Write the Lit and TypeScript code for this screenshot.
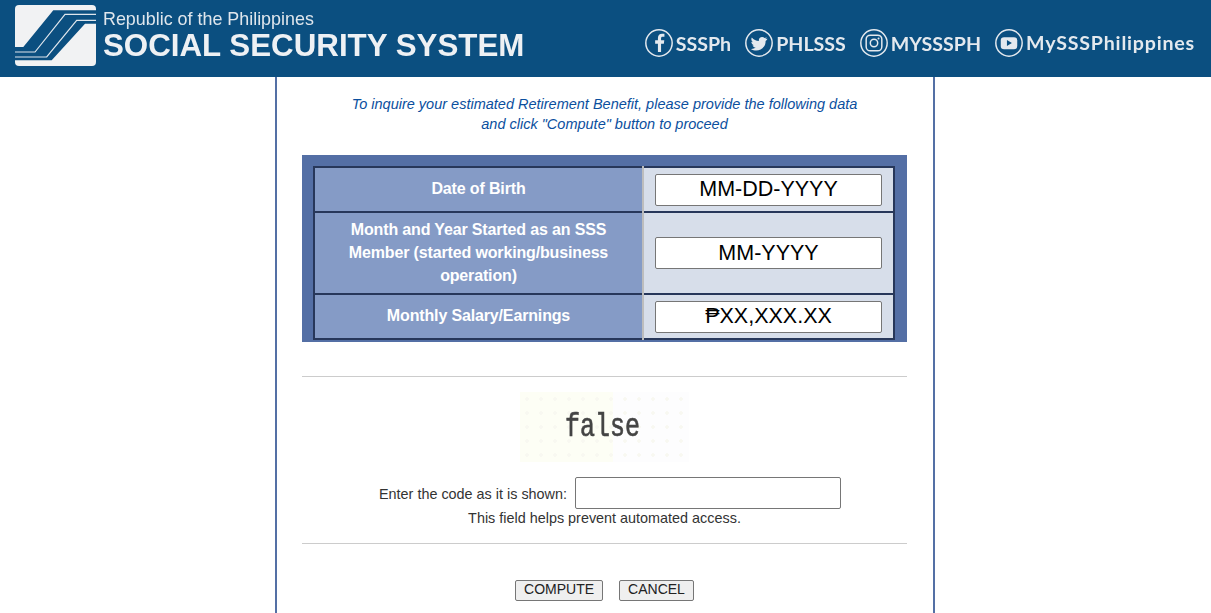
import { LitElement, html, css, svg } from "lit";
import { customElement } from "lit/decorators.js";

const logo = html`<svg class="logo" viewBox="0 0 81 61" width="81" height="61">
  <rect x="0" y="0" width="81" height="61" rx="4" fill="#f1f2f3"></rect>
  <path d="M38.300 5.300 L81 5.300 L81 18.700 L70 18.700 L36.700 55.300 L0 55.300 L0 42 L8.300 42 Z" fill="#0b4f80"></path>
  <path d="M0 47 L20 47 L50 9.300 L81 9.300" fill="none" stroke="#dfe6ec" stroke-width="1.200"></path>
  <path d="M0 52 L31.700 52 L61.700 15.300 L81 15.300" fill="none" stroke="#dfe6ec" stroke-width="1.200"></path>
</svg>`;

const icons = {
  f: svg`<path d="M19.500 28V17.800h3.400l.5-4h-3.900v-2.500c0-1.200.4-1.900 2-1.900h2.100V5.900c-.5-.1-1.600-.2-2.900-.2-3 0-5 1.800-5 5.100v3h-3.400v4h3.400V28z" fill="#e4e9ee"></path>`,
  t: svg`<path d="M27 11.500c-.8.400-1.600.6-2.400.7.900-.5 1.500-1.300 1.800-2.300-.8.500-1.700.8-2.600 1-1.700-1.800-4.500-1.700-6 .1-.9 1.100-1.200 2.400-.9 3.700-3.400-.2-6.500-1.800-8.600-4.400-1.100 1.900-.6 4.400 1.300 5.700-.7 0-1.300-.2-1.900-.5 0 2 1.400 3.700 3.400 4.100-.6.200-1.300.2-1.900.1.600 1.700 2.100 2.800 3.900 2.900-1.700 1.300-3.900 2-6 1.700 5.500 3.300 12.500 2.100 16-3 1.300-2 2-4.300 1.900-6.600.8-.6 1.500-1.300 2-2.200z" fill="#e4e9ee"></path>`,
  i: svg`<rect x="7.500" y="7.500" width="19" height="19" rx="5" fill="none" stroke="#e4e9ee" stroke-width="1.800"></rect><circle cx="17" cy="17" r="4.500" fill="none" stroke="#e4e9ee" stroke-width="1.800"></circle><circle cx="22.500" cy="11.500" r="1.200" fill="#e4e9ee"></circle>`,
  y: svg`<rect x="7" y="10" width="20" height="14.500" rx="4" fill="#e4e9ee"></rect><path d="M14.500 13.500v7l6-3.500z" fill="#0b4f80"></path>`,
};

const socials = [
  { icon: icons.f, label: "SSSPh", wide: false },
  { icon: icons.t, label: "PHLSSS", wide: false },
  { icon: icons.i, label: "MYSSSPH", wide: false },
  { icon: icons.y, label: "MySSSPhilippines", wide: true },
];

@customElement("app-root")
export class AppRoot extends LitElement {
  static styles = css`
    :host {
      display: block;
      height: 613px;
      overflow: hidden;
      font-family: "Liberation Sans", Arial, sans-serif;
      background: #fff;
    }
    .top {
      height: 77px;
      background: #0b4f80;
      display: flex;
      justify-content: space-between;
      padding: 5px 16px 0 15px;
      box-sizing: border-box;
    }
    .brand {
      display: flex;
      gap: 7px;
      height: 61px;
      color: #eef1f4;
    }
    .logo {
      flex: none;
    }
    .brand-text {
      padding-top: 4px;
      filter: blur(0.3px);
    }
    .republic {
      font-size: 17.900px;
      line-height: 20px;
      color: #dfe6ec;
    }
    .sss {
      font-size: 31.300px;
      line-height: 33px;
      font-weight: 700;
      white-space: nowrap;
    }
    .social {
      display: flex;
      align-items: center;
      gap: 14px;
      height: 76px;
      margin-top: -5px;
      padding-top: 10px;
      box-sizing: border-box;
      color: #e4e9ee;
      font-family: Lato, sans-serif;
      font-weight: 700;
      font-size: 19.600px;
      filter: blur(0.3px);
    }
    .soc {
      display: flex;
      align-items: center;
      gap: 3px;
    }
    .soc svg {
      flex: none;
    }
    .soc .wide {
      letter-spacing: 0.800px;
      margin-top: -2px;
    }
    .page {
      width: 660px;
      margin-left: 275px;
      box-sizing: border-box;
      border-left: 2px solid #5470a5;
      border-right: 2px solid #5470a5;
      height: 536px;
      padding: 17px 26px 0 25px;
    }
    .intro {
      margin: 0 0 21px;
      text-align: center;
      color: #0b4f9e;
      font-size: 14.500px;
      font-style: italic;
      line-height: 20px;
    }
    .frame {
      background: #546fa5;
      padding: 11px 12px 2px 11px;
    }
    .grid {
      position: relative;
      display: grid;
      grid-template-columns: 329px 249px;
      grid-template-rows: 45px 82px 45px;
      border-top: 2px solid #27375a;
      border-left: 2px solid #27375a;
      border-right: 2px solid #27375a;
    }
    .sep {
      position: absolute;
      left: 327px;
      top: -2px;
      bottom: 0;
      width: 2px;
      background: #bdbdbd;
    }
    .lbl {
      background: #859bc6;
      color: #fff;
      font-weight: 700;
      font-size: 16px;
      line-height: 23px;
      text-align: center;
      display: flex;
      align-items: center;
      justify-content: center;
      padding: 0 30px 2px 28px;
      box-sizing: border-box;
      border-bottom: 2px solid #27375a;
      letter-spacing: -0.150px;
    }
    .val {
      background: #d7deea;
      display: flex;
      align-items: center;
      justify-content: center;
      border-bottom: 2px solid #27375a;
    }
    input {
      box-sizing: border-box;
      font-family: inherit;
      background: #fff;
      border: 1px solid #767676;
      border-radius: 2px;
      padding: 0;
      outline: none;
    }
    .val input {
      width: 227px;
      height: 32px;
      font-size: 21.500px;
      text-align: center;
    }
    .val input::placeholder {
      color: #000;
      opacity: 1;
    }
    hr {
      border: 0;
      border-top: 1px solid #ccc;
      margin: 0;
    }
    .rule-a {
      margin-top: 34px;
    }
    .captcha {
      width: 169px;
      height: 70px;
      margin: 15px auto;
      padding-right: 4px;
      box-sizing: border-box;
      background-color: #fdfdfe;
      background-image:
        radial-gradient(circle, #f8f8f1 1.500px, transparent 2px),
        linear-gradient(90deg, #fdfef5 55%, #fdfdfe 55%);
      background-size: 14px 14px, 100% 100%;
      display: flex;
      align-items: center;
      justify-content: center;
      color: #444;
      font-family: "Liberation Mono", monospace;
      font-size: 25px;
    }
    .captcha span {
      display: block;
      transform: scaleY(1.300);
      -webkit-text-stroke: 0.500px #444;
      filter: blur(0.500px);
    }
    .code {
      display: flex;
      justify-content: center;
      align-items: center;
      gap: 8px;
      padding-left: 11px;
      color: #333;
      font-size: 14.400px;
      height: 32px;
    }
    .code label {
      margin-top: 2px;
    }
    .code input {
      width: 266px;
      height: 32px;
    }
    .help {
      text-align: center;
      color: #333;
      font-size: 14.400px;
      line-height: 15px;
      margin: 2px 0 17px;
    }
    .actions {
      display: flex;
      justify-content: center;
      gap: 16px;
      margin-top: 36px;
    }
    button {
      font-family: inherit;
      font-size: 14px;
      color: #222;
      background: #efefef;
      border: 1px solid #767676;
      border-radius: 2px;
      height: 21px;
      padding: 0 8px 2px;
      line-height: 17px;
    }
  `;

  render() {
    return html`
      <div class="top">
        <div class="brand">
          ${logo}
          <div class="brand-text">
            <div class="republic">Republic of the Philippines</div>
            <div class="sss">SOCIAL SECURITY SYSTEM</div>
          </div>
        </div>
        <div class="social">
          ${socials.map(
            (s) => html`<div class="soc">
              <svg viewBox="0 0 34 34" width="28" height="28">
                <circle cx="17" cy="17" r="16" fill="none" stroke="#e4e9ee" stroke-width="1.800"></circle>
                ${s.icon}
              </svg>
              <span class=${s.wide ? "wide" : ""}>${s.label}</span>
            </div>`
          )}
        </div>
      </div>
      <div class="page">
        <p class="intro">
          To inquire your estimated Retirement Benefit, please provide the following data<br />
          and click "Compute" button to proceed
        </p>
        <div class="frame">
          <div class="grid">
            <div class="lbl">Date of Birth</div>
            <div class="val"><input placeholder="MM-DD-YYYY" /></div>
            <div class="lbl">Month and Year Started as an SSS Member (started working/business operation)</div>
            <div class="val"><input placeholder="MM-YYYY" /></div>
            <div class="lbl">Monthly Salary/Earnings</div>
            <div class="val"><input placeholder="₱XX,XXX.XX" /></div>
            <div class="sep"></div>
          </div>
        </div>
        <hr class="rule-a" />
        <div class="captcha"><span>false</span></div>
        <div class="code"><label>Enter the code as it is shown:</label><input /></div>
        <div class="help">This field helps prevent automated access.</div>
        <hr />
        <div class="actions">
          <button>COMPUTE</button>
          <button>CANCEL</button>
        </div>
      </div>
    `;
  }
}
